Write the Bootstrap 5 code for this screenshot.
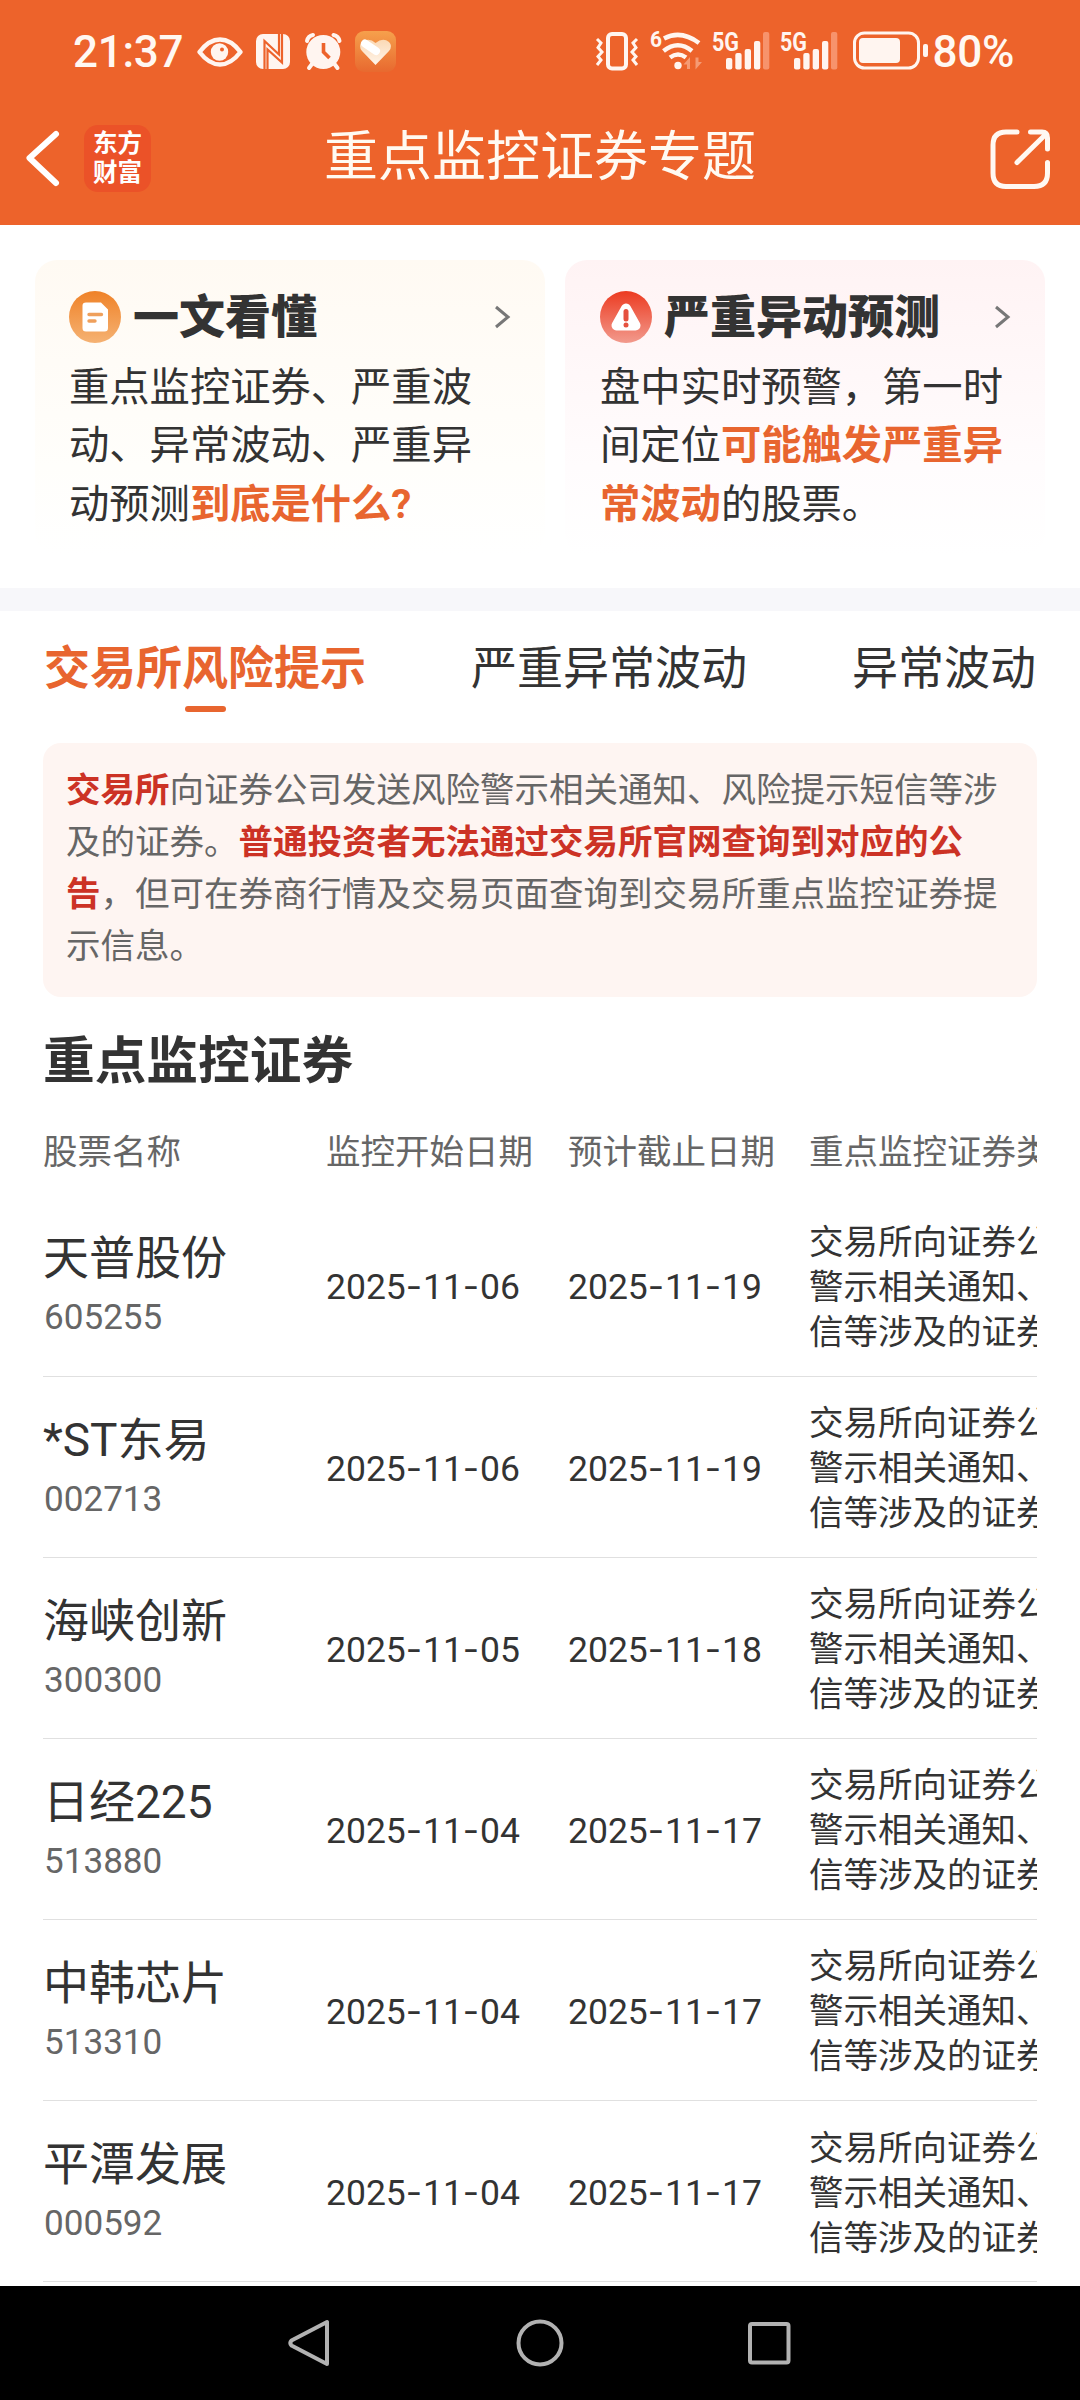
<!DOCTYPE html>
<html lang="zh-CN">
<head>
<meta charset="utf-8">
<meta name="viewport" content="width=device-width, initial-scale=1">
<title>重点监控证券专题</title>
<link href="https://cdn.jsdelivr.net/npm/bootstrap@5.3.0/dist/css/bootstrap.min.css" rel="stylesheet">
<style>
  body { font-family: Roboto, "Noto Sans CJK SC", sans-serif; color: #333; background: #fff; width: 1080px; height: 2400px; overflow: hidden; }
  svg { display: block; flex: none; overflow: visible; }
  .brand-bg { background: #ed632b; height: 225px; color: #fff8f2; }
  .status-bar { height: 104px; padding: 0 66px 0 73px; }
  .clock { font-size: 44px; line-height: 52px; font-weight: 500; letter-spacing: -.3px; }
  .title-bar { height: 108px; padding: 0 28px 0 26px; }
  .page-title { font-size: 54px; line-height: 70px; font-weight: 400; color: #fffaf2; padding-left: 2px; }
  .side { width: 140px; }
  .brand-logo { width: 67px; height: 67px; border-radius: 14px; background: #eb5228; font-family: "Noto Sans CJK SC", sans-serif; font-size: 24.5px; line-height: 29px; font-weight: 700; margin-left: 25px; padding-top: 2px; color: #fff; }
  .intro { height: 363px; padding: 35px 35px 0; }
  .promo { height: 295px; border-radius: 22px; }
  .promo-guide { width: 510px; padding: 28px 33px 0 34px; background: linear-gradient(#fffaf3, #fffefb 70%, #fff); }
  .promo-alert { width: 480px; padding: 28px 33px 0 35px; background: linear-gradient(#fff3f4, #fffcfd 70%, #fff); }
  .promo-title { font-size: 46px; line-height: 58px; font-weight: 900; margin-left: 12px; }
  .promo-text { font-size: 40.3px; line-height: 58.3px; margin-top: 13px; white-space: nowrap; }
  .hot { color: #e8652f; font-weight: 700; }
  .divider { height: 23px; background: #f7f7fa; }
  .topic-tabs { height: 132px; padding: 27px 43px 0 44px; gap: 105px; font-size: 46px; line-height: 60px; }
  .topic-tabs .nav-link { padding: 0; color: #333; }
  .topic-tabs .nav-link.active { color: #e8652f; font-weight: 700; }
  .topic-tabs .active::after { content: ""; display: block; width: 41px; height: 6px; border-radius: 3px; background: #e8652f; margin: 8px auto 0; }
  .notice { margin: 0 43px; height: 254px; border-radius: 18px; background: #fef5f2; padding: 21px 23px; font-size: 34.5px; line-height: 52px; color: #666; white-space: nowrap; }
  .notice b { color: #cc3225; }
  .list-title { font-size: 51.7px; line-height: 70px; font-weight: 700; margin: 30px 0 0 43px; }
  .list-clip { margin: 10px 43px 0; overflow: hidden; height: 1179px; }
  .stock-table { width: 1030px; table-layout: fixed; margin: 0; color: #333; --bs-table-bg: transparent; }
  .stock-table > thead > tr > th { padding: 2px 0 0; height: 88px; border: 0; font-size: 34.5px; font-weight: 400; color: #666; white-space: nowrap; vertical-align: middle; line-height: 50px; }
  .stock-table > tbody > tr > td { padding: 4px 0 0; height: 181.1px; border-bottom: 1px solid #e0e0e0; color: #333; white-space: nowrap; vertical-align: middle; }
  .s-name { font-size: 46px; line-height: 60px; }
  .s-code { font-size: 35.1px; line-height: 58px; color: #666; padding-left: 1px; }
  .s-date { font-size: 35.5px; line-height: 45px; }
  .s-date i { font-family: Inter, sans-serif; font-style: normal; letter-spacing: .8px; }
  .s-kind { font-size: 34.5px; line-height: 45px; }
  .sys-nav { height: 114px; background: #000; padding-left: 287px; }
</style>
</head>
<body>
<header class="brand-bg">
  <div class="status-bar d-flex align-items-center">
    <span class="clock">21:37</span>
    <svg style="margin-left:14px" width="46" height="44" viewBox="199 30 46 44"><path d="M201.500 52Q211 39.500 222 39.500T242.500 52Q233 64.500 222 64.500T201.500 52Z" fill="none" stroke="#fff5f0" stroke-width="4.500" stroke-linejoin="round"/><circle cx="221.500" cy="52" r="8.700" fill="#fff5f0"/><circle cx="224" cy="49.500" r="2" fill="#ed632b"/></svg>
    <svg style="margin-left:13px" width="34" height="44" viewBox="258 30 34 44"><rect x="258" y="34" width="34" height="35" rx="7" fill="#fff5f0"/><path d="M266.500 69V41L281 54.500V34M284 34V62.500L269.500 49.500V69" fill="none" stroke="#ed632b" stroke-width="2.200"/></svg>
    <svg style="margin-left:14px" width="38" height="44" viewBox="306 30 38 44"><g fill="none" stroke="#fff5f0" stroke-width="4" stroke-linecap="round"><path d="M309 41Q310 36 315 35M341.500 41Q340.500 36 335.500 35M314 64l-3 4M336.500 64l3 4"/></g><circle cx="325.300" cy="52" r="17" fill="#fff5f0"/><path d="M325.500 43v9l6 6" fill="none" stroke="#ed632b" stroke-width="3.600"/></svg>
    <svg style="margin-left:13px" width="41" height="44" viewBox="357 30 41 44"><defs><linearGradient id="hb" x2="0" y2="1"><stop stop-color="#f6a04c"/><stop offset="1" stop-color="#e8692f"/></linearGradient><linearGradient id="hh" x2="0" y2="1"><stop stop-color="#fbd9b5"/><stop offset="1" stop-color="#fff5ea"/></linearGradient></defs><rect x="357" y="31" width="41" height="41" rx="9" fill="url(#hb)"/><path d="M377.500 65L364 51Q360 46 364 42Q371 37 377.500 43Q385 37 391 42Q395 46 391 51Z" fill="url(#hh)"/><path d="M367 43.500L378 51" stroke="#fff" stroke-width="8" stroke-linecap="round"/></svg>
    <div class="d-flex align-items-center ms-auto">
      <svg width="43" height="44" viewBox="597 30 43 44" fill="none" stroke="#fff5f0"><rect x="609" y="34" width="18" height="34.500" rx="4" stroke-width="4"/><path d="M598 39l4 4-3 4.500 4 4.500-4 4.500 3 3.500-4 5M638 39l-4 4 3 4.500-4 4.500 4 4.500-3 3.500 4 5" stroke-width="3"/></svg>
      <svg style="margin-left:12px" width="52" height="44" viewBox="652 30 52 44" fill="none" stroke="#fff5f0"><text x="651" y="47" font-family="Roboto" font-size="22" font-weight="700" fill="#fff5f0" stroke="none" textLength="12" lengthAdjust="spacingAndGlyphs">6</text><path d="M665 38.500Q682 29.500 700 43M664.500 51Q679 39.500 693 51M671 57.500Q679 51.500 687 57.500" stroke-width="4.500"/><circle cx="679" cy="65.500" r="3.700" fill="#fff5f0" stroke="none"/><path d="M684.500 64.500l6.500-7.500v12h-3v-4.500zM703 62l-6.500 7.500v-12h3v4.500z" fill="#f59a74" stroke="none"/></svg>
      <svg style="margin-left:10px" width="57" height="44" viewBox="714 30 57 44" fill="#fff5f0"><text x="713" y="51" font-family="Roboto" font-size="26" font-weight="700" textLength="27" lengthAdjust="spacingAndGlyphs">5G</text><rect x="727" y="58" width="6.300" height="11.500" rx="2"/><rect x="736.300" y="53" width="6.300" height="16.500" rx="2"/><rect x="745.700" y="49" width="6.300" height="20.500" rx="2"/><rect x="755" y="41" width="6.300" height="28.500" rx="2"/><rect x="764" y="32" width="6.300" height="37.500" rx="2" fill="#f7936c"/></svg>
      <svg style="margin-left:11px" width="57" height="44" viewBox="714 30 57 44" fill="#fff5f0"><text x="713" y="51" font-family="Roboto" font-size="26" font-weight="700" textLength="27" lengthAdjust="spacingAndGlyphs">5G</text><rect x="727" y="58" width="6.300" height="11.500" rx="2"/><rect x="736.300" y="53" width="6.300" height="16.500" rx="2"/><rect x="745.700" y="49" width="6.300" height="20.500" rx="2"/><rect x="755" y="41" width="6.300" height="28.500" rx="2"/><rect x="764" y="32" width="6.300" height="37.500" rx="2" fill="#f7936c"/></svg>
      <svg style="margin-left:15px" width="76" height="44" viewBox="854 30 76 44"><rect x="855.500" y="33" width="64" height="35" rx="10" fill="none" stroke="#fff5f0" stroke-width="3"/><rect x="860" y="38" width="41" height="25" rx="4" fill="#fff5f0"/><rect x="924" y="44" width="5" height="13" rx="2" fill="#fff5f0"/></svg>
      <span class="clock" style="margin-left:3px">80%</span>
    </div>
  </div>
  <div class="title-bar d-flex align-items-center justify-content-between">
    <div class="side d-flex align-items-center">
      <svg width="33" height="60" viewBox="26 127 33 60"><path d="M56 133L29.500 157L56 182" fill="none" stroke="#fff" stroke-width="6" stroke-linecap="round" stroke-linejoin="round"/></svg>
      <div class="brand-logo text-center">东方<br>财富</div>
    </div>
    <h1 class="page-title m-0">重点监控证券专题</h1>
    <div class="side d-flex justify-content-end">
      <svg width="62" height="62" viewBox="990 128 62 62" fill="none" stroke="#fff8f2" stroke-width="5" stroke-linecap="round" stroke-linejoin="round"><path d="M1017 133H1006Q993 133 993 146V174Q993 187.500 1006 187.500H1034Q1047.500 187.500 1047.500 174V163.500M1030.500 133H1042Q1047.500 133 1047.500 139V150M1045.500 135.500L1017 163.500"/></svg>
    </div>
  </div>
</header>

<section class="intro d-flex justify-content-between">
  <article class="promo promo-guide">
    <div class="d-flex align-items-center">
      <svg width="52" height="52" viewBox="0 0 52 52"><defs><linearGradient id="og" x2="0" y2="1"><stop stop-color="#ef8228"/><stop offset="1" stop-color="#f5b273"/></linearGradient></defs><circle cx="26" cy="26" r="26" fill="url(#og)"/><path d="M16 11.500H32L39 18.500V37Q39 40.500 35.500 40.500H17Q13.500 40.500 13.500 37V14.500Q13.500 11.500 17 11.500Z" fill="#fff"/><path d="M20 23.500H32.500M20 30H26" stroke="#efa05c" stroke-width="3.400" stroke-linecap="round"/></svg>
      <h2 class="promo-title mb-0">一文看懂</h2>
      <svg class="ms-auto" width="18" height="26" viewBox="0 0 18 26"><path d="M2 3L14 13L2 23" fill="none" stroke="#777" stroke-width="3"/></svg>
    </div>
    <p class="promo-text mb-0">重点监控证券、严重波<br>动、异常波动、严重异<br>动预测<span class="hot">到底是什么?</span></p>
  </article>
  <article class="promo promo-alert">
    <div class="d-flex align-items-center">
      <svg width="52" height="52" viewBox="0 0 52 52"><defs><linearGradient id="rg" x2="0" y2="1"><stop stop-color="#ec3b21"/><stop offset="1" stop-color="#f29a8d"/></linearGradient></defs><circle cx="26" cy="26" r="26" fill="url(#rg)"/><path d="M26 17.500L16.500 34.500H35.500Z" fill="#fff" stroke="#fff" stroke-width="10" stroke-linejoin="round"/><path d="M26 20.500V28" stroke="#e5513f" stroke-width="5" stroke-linecap="round"/><circle cx="26" cy="34" r="2.500" fill="#e5513f"/></svg>
      <h2 class="promo-title mb-0">严重异动预测</h2>
      <svg class="ms-auto" width="18" height="26" viewBox="0 0 18 26"><path d="M2 3L14 13L2 23" fill="none" stroke="#777" stroke-width="3"/></svg>
    </div>
    <p class="promo-text mb-0">盘中实时预警，第一时<br>间定位<span class="hot">可能触发严重异<br>常波动</span>的股票。</p>
  </article>
</section>
<div class="divider"></div>

<nav class="topic-tabs nav flex-nowrap text-nowrap align-items-start">
  <a class="nav-link active">交易所风险提示</a>
  <a class="nav-link">严重异常波动</a>
  <a class="nav-link">异常波动</a>
</nav>
<div class="notice"><b>交易所</b>向证券公司发送风险警示相关通知、风险提示短信等涉<br>及的证券。<b>普通投资者无法通过交易所官网查询到对应的公<br>告</b>，但可在券商行情及交易页面查询到交易所重点监控证券提<br>示信息。</div>

<h2 class="list-title">重点监控证券</h2>
<div class="list-clip">
  <table class="table stock-table">
    <colgroup><col style="width:283px"><col style="width:242px"><col style="width:241px"><col></colgroup>
    <thead><tr><th>股票名称</th><th>监控开始日期</th><th>预计截止日期</th><th>重点监控证券类</th></tr></thead>
    <tbody>
      <tr><td><div class="s-name">天普股份</div><div class="s-code">605255</div></td><td class="s-date">2025<i>-</i>11<i>-</i>06</td><td class="s-date">2025<i>-</i>11<i>-</i>19</td><td class="s-kind">交易所向证券公<br>警示相关通知、<br>信等涉及的证券</td></tr>
      <tr><td><div class="s-name">*ST东易</div><div class="s-code">002713</div></td><td class="s-date">2025<i>-</i>11<i>-</i>06</td><td class="s-date">2025<i>-</i>11<i>-</i>19</td><td class="s-kind">交易所向证券公<br>警示相关通知、<br>信等涉及的证券</td></tr>
      <tr><td><div class="s-name">海峡创新</div><div class="s-code">300300</div></td><td class="s-date">2025<i>-</i>11<i>-</i>05</td><td class="s-date">2025<i>-</i>11<i>-</i>18</td><td class="s-kind">交易所向证券公<br>警示相关通知、<br>信等涉及的证券</td></tr>
      <tr><td><div class="s-name">日经225</div><div class="s-code">513880</div></td><td class="s-date">2025<i>-</i>11<i>-</i>04</td><td class="s-date">2025<i>-</i>11<i>-</i>17</td><td class="s-kind">交易所向证券公<br>警示相关通知、<br>信等涉及的证券</td></tr>
      <tr><td><div class="s-name">中韩芯片</div><div class="s-code">513310</div></td><td class="s-date">2025<i>-</i>11<i>-</i>04</td><td class="s-date">2025<i>-</i>11<i>-</i>17</td><td class="s-kind">交易所向证券公<br>警示相关通知、<br>信等涉及的证券</td></tr>
      <tr><td><div class="s-name">平潭发展</div><div class="s-code">000592</div></td><td class="s-date">2025<i>-</i>11<i>-</i>04</td><td class="s-date">2025<i>-</i>11<i>-</i>17</td><td class="s-kind">交易所向证券公<br>警示相关通知、<br>信等涉及的证券</td></tr>
    </tbody>
  </table>
</div>

<footer class="sys-nav d-flex align-items-center">
  <svg width="44" height="50" viewBox="0 0 44 50"><path d="M40 4V46L4.500 27.500Q2 25 4.500 22.500Z" fill="none" stroke="#b2b2b2" stroke-width="4" stroke-linejoin="round"/></svg>
  <svg style="margin-left:185px" width="48" height="50" viewBox="0 0 48 50"><circle cx="24" cy="25" r="21.500" fill="none" stroke="#b2b2b2" stroke-width="4"/></svg>
  <svg style="margin-left:181px" width="46" height="50" viewBox="0 0 46 50"><rect x="5" y="6" width="38.500" height="38.500" rx="2" fill="none" stroke="#b2b2b2" stroke-width="4"/></svg>
</footer>
<script src="https://cdn.jsdelivr.net/npm/bootstrap@5.3.0/dist/js/bootstrap.bundle.min.js"></script>
</body>
</html>
